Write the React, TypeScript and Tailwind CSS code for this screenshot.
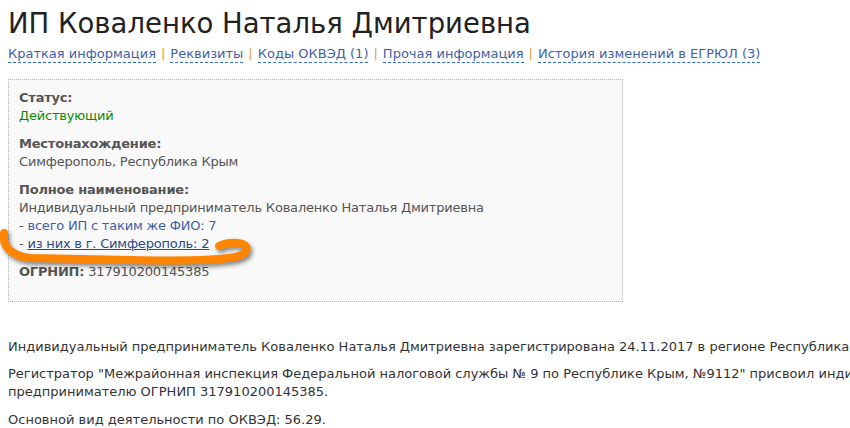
import React from "react";

const navLinks = [
  "Краткая информация",
  "Реквизиты",
  "Коды ОКВЭД (1)",
  "Прочая информация",
  "История изменений в ЕГРЮЛ (3)",
];

function Field({ label, children, last }: { label: string; children: React.ReactNode; last?: boolean }) {
  return (
    <div className={last ? "" : "mb-[10px]"}>
      <div className="font-bold text-[#555]">{label}</div>
      {children}
    </div>
  );
}

export default function App() {
  return (
    <div className="relative w-[850px] h-[428px] overflow-hidden bg-white font-['DejaVu_Sans',Verdana,sans-serif] text-[13px] leading-[18px] text-[#333]">
      <div className="w-[980px] px-2 pt-[6px]">
        {/* Заголовок */}
        <h1 className="text-[27.5px] leading-[34px] font-normal text-[#222]">
          ИП Коваленко Наталья Дмитриевна
        </h1>

        {/* Навигация */}
        <div className="mt-[5px] flex items-center whitespace-nowrap">
          {navLinks.map((l, i) => (
            <span key={l} className="flex items-center">
              {i > 0 && <span className="mx-[5px] text-[#d9a14a]">|</span>}
              <a className="text-[#3f5fa6] border-b border-dashed border-[#2d6bc4] leading-[16px]">{l}</a>
            </span>
          ))}
        </div>

        {/* Карточка */}
        <div className="mt-[16px] w-[615px] border border-dotted border-[#b5b5b5] bg-[#f9f9f9] pl-[10px] pr-3 pt-[9px] pb-[20px] text-[#555] tracking-[-0.2px]">
          <Field label="Статус:">
            <div className="text-[#0a8a0a]">Действующий</div>
          </Field>
          <Field label="Местонахождение:">
            <div>Симферополь, Республика Крым</div>
          </Field>
          <Field label="Полное наименование:">
            <div>Индивидуальный предприниматель Коваленко Наталья Дмитриевна</div>
            <div>
              - <a className="text-[#3f5fa6]">всего ИП с таким же ФИО: 7</a>
            </div>
            <div>
              - <a className="text-[#2c4a86] underline">из них в г. Симферополь: 2</a>
            </div>
          </Field>
          <div className="mt-[9px]">
            <span className="font-bold">ОГРНИП:</span> 317910200145385
          </div>
        </div>

        {/* Описание */}
        <div className="mt-[36px] whitespace-nowrap">
          <p className="mb-[9px]">
            Индивидуальный предприниматель Коваленко Наталья Дмитриевна зарегистрирована 24.11.2017 в регионе Республика Крым.
          </p>
          <p className="mb-[10px]">
            Регистратор "Межрайонная инспекция Федеральной налоговой службы № 9 по Республике Крым, №9112" присвоил индивидуальному
            <br />
            предпринимателю ОГРНИП 317910200145385.
          </p>
          <p>Основной вид деятельности по ОКВЭД: 56.29.</p>
        </div>
      </div>

      {/* Пометка маркером */}
      <svg
        className="absolute left-0 top-0 pointer-events-none"
        width="260"
        height="280"
        viewBox="0 0 260 280"
        style={{ filter: "drop-shadow(2px 3px 2px rgba(0,0,0,0.45))" }}
      >
        <path
          d="M4 233 C2 245 10 256 30 258 L130 260 C180 261 220 260 235 257 C250 254 250 244 238 243 C230 242 223 244 219 246"
          fill="none"
          stroke="#ff8500"
          strokeWidth="8"
          strokeLinecap="round"
          strokeLinejoin="round"
        />
      </svg>
    </div>
  );
}
